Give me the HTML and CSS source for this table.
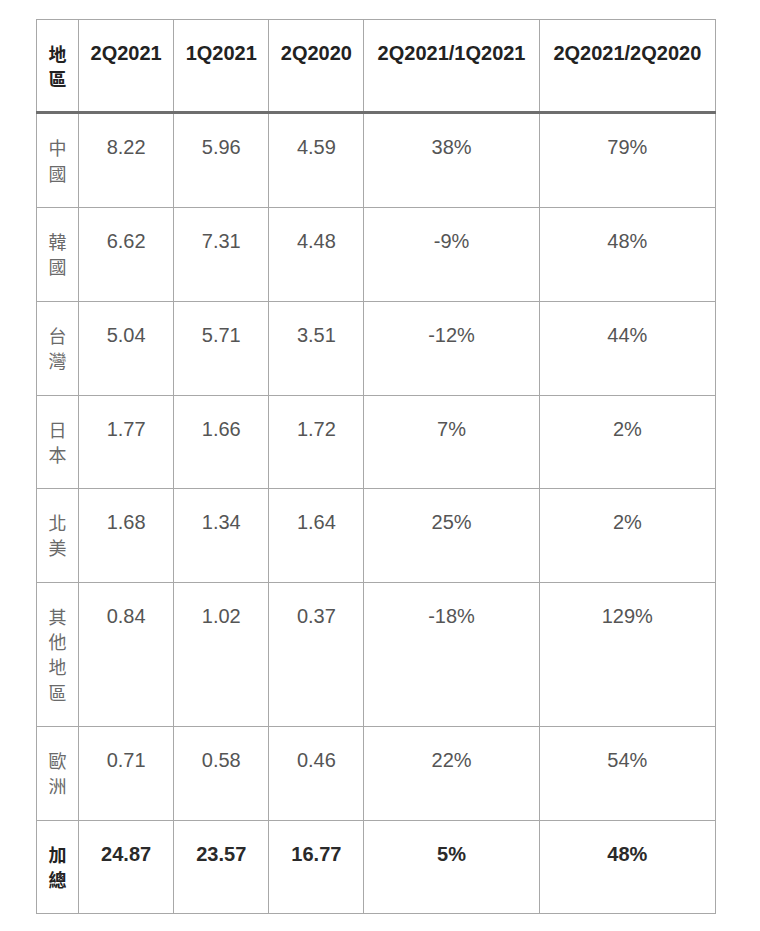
FILE: index.html
```html
<!DOCTYPE html>
<html lang="zh-Hant">
<head>
<meta charset="utf-8">
<title>地區出貨</title>
<link rel="stylesheet" href="styles.css">
</head>
<body>
<div class="wrap">
<table class="data">
<colgroup>
<col class="c-region"><col class="c-num"><col class="c-num"><col class="c-num"><col class="c-pct"><col class="c-pct2">
</colgroup>
<thead>
<tr>
<th class="region">地區</th>
<th>2Q2021</th>
<th>1Q2021</th>
<th>2Q2020</th>
<th>2Q2021/1Q2021</th>
<th>2Q2021/2Q2020</th>
</tr>
</thead>
<tbody>
<tr><td class="region">中國</td><td>8.22</td><td>5.96</td><td>4.59</td><td>38%</td><td>79%</td></tr>
<tr><td class="region">韓國</td><td>6.62</td><td>7.31</td><td>4.48</td><td>-9%</td><td>48%</td></tr>
<tr><td class="region">台灣</td><td>5.04</td><td>5.71</td><td>3.51</td><td>-12%</td><td>44%</td></tr>
<tr><td class="region">日本</td><td>1.77</td><td>1.66</td><td>1.72</td><td>7%</td><td>2%</td></tr>
<tr><td class="region">北美</td><td>1.68</td><td>1.34</td><td>1.64</td><td>25%</td><td>2%</td></tr>
<tr><td class="region">其他地區</td><td>0.84</td><td>1.02</td><td>0.37</td><td>-18%</td><td>129%</td></tr>
<tr><td class="region">歐洲</td><td>0.71</td><td>0.58</td><td>0.46</td><td>22%</td><td>54%</td></tr>
<tr class="total"><td class="region">加總</td><td>24.87</td><td>23.57</td><td>16.77</td><td>5%</td><td>48%</td></tr>
</tbody>
</table>
</div>
</body>
</html>
```
FILE: styles.css
```css
html, body {
  margin: 0;
  padding: 0;
  background: #ffffff;
}
.wrap {
  padding: 19px 0 0 36px;
}
.data {
  border-collapse: collapse;
  table-layout: fixed;
  width: 680px;
  font-family: "Liberation Sans", Arial, "Noto Sans CJK TC", sans-serif;
  font-size: 20px;
  color: #555555;
}
.c-region { width: 42px; }
.c-num { width: 95px; }
.c-pct { width: 175px; }
.c-pct2 { width: 176px; }
.data th,
.data td {
  border: 1px solid #a8a8a8;
  padding: 21px 2px 21.3px;
  line-height: 25.2px;
  text-align: center;
  vertical-align: top;
}
.data th {
  font-weight: bold;
  color: #222222;
  padding-bottom: 20px;
  border-bottom: 3px solid #6e6e6e;
}
.data .region {
  padding-left: 10px;
  padding-right: 10px;
  font-family: "Noto Sans CJK TC", sans-serif;
  font-size: 18px;
  font-weight: 400;
  color: #6a6a6a;
  word-break: break-all;
}
.data th.region,
.total td.region {
  font-weight: 700;
  color: #222222;
}
.total td {
  font-weight: bold;
  color: #2a2a2a;
}
```
